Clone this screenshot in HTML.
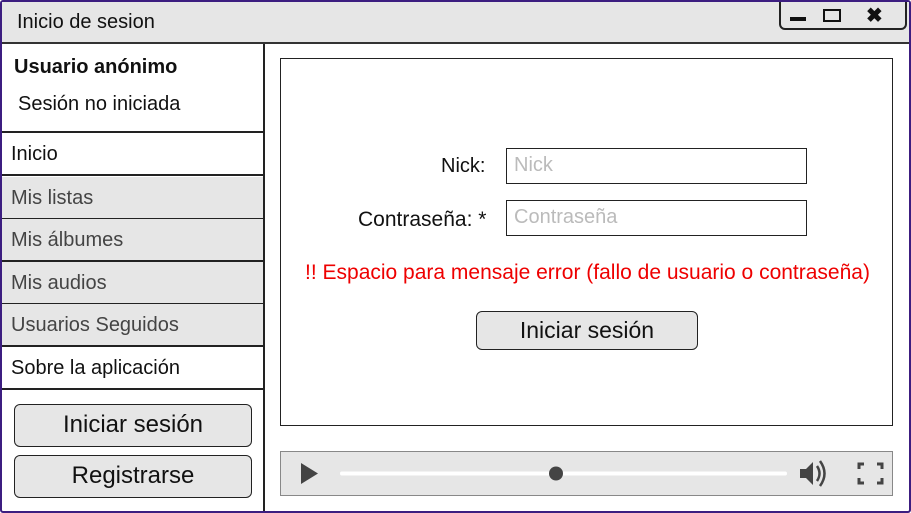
<!DOCTYPE html>
<html><head><meta charset="utf-8"><style>
*{box-sizing:border-box;margin:0;padding:0}
body{width:911px;height:513px;position:relative;background:#fff;font-family:"Liberation Sans",sans-serif;overflow:hidden}
.a{position:absolute}
.item{position:absolute;left:2px;width:261px;height:43px;border-bottom:2px solid #222;font-size:20px;line-height:43px;padding-left:9px;color:#444;background:#e6e6e6}
.btn{position:absolute;border:1.5px solid #222;border-radius:6px;background:#e6e6e6;text-align:center;color:#111}
.inp{position:absolute;left:506px;width:301px;height:36px;border:1.5px solid #222;font-size:20px;color:#bbb;padding-left:7px;line-height:33px}
</style></head><body>
<div class="a" style="left:0;top:0;width:911px;height:513px;border:2px solid #3c1d80;border-radius:3px"></div>
<div class="a" style="left:2px;top:2px;width:907px;height:42px;background:#e6e6e6;border-bottom:2px solid #333"></div>
<div class="a" style="left:17px;top:11px;font-size:20px;font-family:'Liberation Sans Narrow','Liberation Sans',sans-serif;color:#111">Inicio de sesion</div>
<div class="a" style="left:779px;top:2px;width:128px;height:28px;border:2px solid #222;border-top:none;border-radius:0 0 6px 6px"></div>
<div class="a" style="left:790px;top:17px;width:16px;height:4px;background:#111"></div>
<div class="a" style="left:823px;top:9px;width:18px;height:13px;border:2.5px solid #111"></div>
<div class="a" style="left:866px;top:3px;font-size:20px;font-weight:bold;color:#111">✖</div>
<div class="a" style="left:263px;top:44px;width:2px;height:467px;background:#222"></div>
<div class="a" style="left:2px;top:131px;width:261px;height:2px;background:#222"></div>
<div class="a" style="left:14px;top:56px;font-size:20px;font-weight:bold;font-family:'Liberation Sans Narrow','Liberation Sans',sans-serif;color:#111">Usuario anónimo</div>
<div class="a" style="left:18px;top:93px;font-size:20px;font-family:'Liberation Sans Narrow','Liberation Sans',sans-serif;color:#111">Sesión no iniciada</div>
<div class="item" style="top:133px;background:#fff;color:#111">Inicio</div>
<div class="item" style="top:177px">Mis listas</div>
<div class="item" style="top:219px">Mis álbumes</div>
<div class="item" style="top:262px">Mis audios</div>
<div class="item" style="top:304px">Usuarios Seguidos</div>
<div class="item" style="top:347px;background:#fff;color:#111">Sobre la aplicación</div>
<div class="btn" style="left:14px;top:404px;width:238px;height:43px;font-size:24px;line-height:40px">Iniciar sesión</div>
<div class="btn" style="left:14px;top:455px;width:238px;height:43px;font-size:24px;line-height:40px">Registrarse</div>
<div class="a" style="left:280px;top:58px;width:613px;height:368px;border:1.5px solid #222"></div>
<div class="a" style="left:441px;top:155px;font-size:20px;color:#111">Nick:</div>
<div class="inp" style="top:148px">Nick</div>
<div class="a" style="left:358px;top:208px;font-size:21px;color:#111">Contraseña: *</div>
<div class="inp" style="top:200px">Contraseña</div>
<div class="a" style="left:305px;top:261px;font-size:21px;color:#e00;white-space:nowrap">!! Espacio para mensaje error (fallo de usuario o contraseña)</div>
<div class="btn" style="left:476px;top:311px;width:222px;height:39px;font-size:23px;line-height:36px">Iniciar sesión</div>
<div class="a" style="left:280px;top:451px;width:613px;height:45px;background:#e6e6e6;border:1px solid #888"></div>
<svg class="a" style="left:280px;top:451px" width="613" height="45">
<polygon points="21,12 38,22.5 21,33" fill="#444"/>
<rect x="60" y="20.5" width="447" height="4" rx="2" fill="#fff"/>
<circle cx="276" cy="22.5" r="7" fill="#444"/>
<polygon points="520,18 526,18 533,11 533,34 526,27 520,27" fill="#444"/>
<path d="M537,15 Q542,22.5 537,30 M540,10 Q549,22.5 540,35" stroke="#444" stroke-width="2.5" fill="none"/>
<path d="M579,18 V13 H584 M597,13 H602 V18 M602,27 V32 H597 M584,32 H579 V27" stroke="#444" stroke-width="3" fill="none"/>
</svg>
</body></html>
